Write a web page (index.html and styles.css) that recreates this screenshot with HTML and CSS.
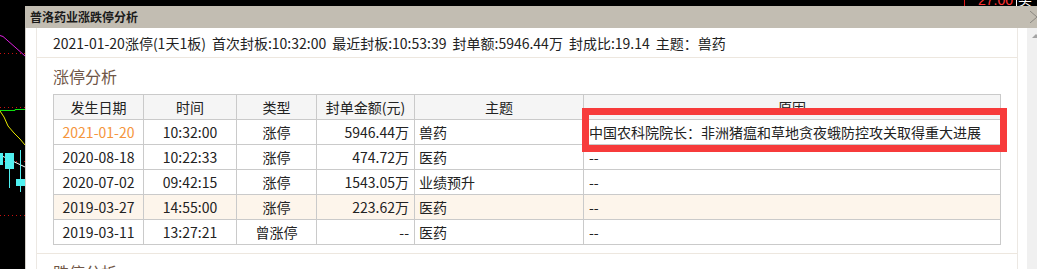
FILE: index.html
```html
<!DOCTYPE html>
<html lang="zh-CN">
<head>
<meta charset="utf-8">
<title>普洛药业涨跌停分析</title>
<link rel="stylesheet" href="styles.css">
</head>
<body>
<svg class="chart" width="1037" height="269" viewBox="0 0 1037 269">
  <rect width="1037" height="269" fill="#000"/>
  <g stroke="#c81010" stroke-dasharray="1 3">
    <line x1="0" y1="53.5" x2="25" y2="53.5"/>
    <line x1="0" y1="107.5" x2="25" y2="107.5"/>
    <line x1="0" y1="161.5" x2="25" y2="161.5"/>
    <line x1="0" y1="215.5" x2="25" y2="215.5"/>
  </g>
  <polyline points="0,35.5 3,36.5 20,51.5 25,56" fill="none" stroke="#e020e0"/>
  <polyline points="0,110.5 15,110.5 15,109.5 25,109.5" fill="none" stroke="#10e010"/>
  <polyline points="0,111 4,117 8,126 14,133 20,139 25,145" fill="none" stroke="#e8e800"/>
  <polyline points="0,155 25,167" fill="none" stroke="#ffffff"/>
  <g fill="#50f0f0" stroke="none">
    <rect x="0" y="153" width="3" height="12"/>
    <rect x="5" y="153" width="9" height="16"/>
    <rect x="9" y="168" width="1" height="20"/>
    <rect x="16" y="179" width="9" height="7"/>
    <rect x="20" y="150" width="1" height="42"/>
  </g>
  <line x1="964.5" y1="0" x2="964.5" y2="6" stroke="#e01818"/>
  <text x="978" y="5" fill="#ff3333" font-family="Liberation Sans, sans-serif" font-size="14">27.00</text>
  <line x1="1016.5" y1="0" x2="1016.5" y2="6" stroke="#ffffff"/>
  <text x="1018" y="5" fill="#ffffff" font-family="Noto Sans CJK SC, sans-serif" font-size="14">买</text>
</svg>

<div class="dialog">
  <div class="titlebar">
    <span class="title">普洛药业涨跌停分析</span>
    <svg class="close" width="7" height="12" viewBox="0 0 7 12">
      <line x1="0" y1="0" x2="14" y2="12" stroke="#8a8780"/>
      <line x1="0" y1="12" x2="14" y2="0" stroke="#8a8780"/>
    </svg>
  </div>
  <div class="dlg-body">
    <div class="gutter"></div>
    <div class="panel">
      <div class="info">
        <span>2021-01-20涨停(1天1板)</span>
        <span>首次封板:10:32:00</span>
        <span>最近封板:10:53:39</span>
        <span>封单额:5946.44万</span>
        <span>封成比:19.14</span>
        <span>主题：兽药</span>
      </div>
      <section class="section">
        <h2 class="sec-title">涨停分析</h2>
        <div class="grid">
          <div class="row head">
            <div class="cell c">发生日期</div>
            <div class="cell c">时间</div>
            <div class="cell c">类型</div>
            <div class="cell c">封单金额(元)</div>
            <div class="cell c">主题</div>
            <div class="cell c">原因</div>
          </div>
          <div class="row">
            <div class="cell c latest">2021-01-20</div>
            <div class="cell c">10:32:00</div>
            <div class="cell c">涨停</div>
            <div class="cell r">5946.44万</div>
            <div class="cell l">兽药</div>
            <div class="cell l reason">中国农科院院长：非洲猪瘟和草地贪夜蛾防控攻关取得重大进展</div>
          </div>
          <div class="row">
            <div class="cell c">2020-08-18</div>
            <div class="cell c">10:22:33</div>
            <div class="cell c">涨停</div>
            <div class="cell r">474.72万</div>
            <div class="cell l">医药</div>
            <div class="cell l reason">--</div>
          </div>
          <div class="row">
            <div class="cell c">2020-07-02</div>
            <div class="cell c">09:42:15</div>
            <div class="cell c">涨停</div>
            <div class="cell r">1543.05万</div>
            <div class="cell l">业绩预升</div>
            <div class="cell l reason">--</div>
          </div>
          <div class="row hl">
            <div class="cell c">2019-03-27</div>
            <div class="cell c">14:55:00</div>
            <div class="cell c">涨停</div>
            <div class="cell r">223.62万</div>
            <div class="cell l">医药</div>
            <div class="cell l reason">--</div>
          </div>
          <div class="row">
            <div class="cell c">2019-03-11</div>
            <div class="cell c">13:27:21</div>
            <div class="cell c">曾涨停</div>
            <div class="cell r">--</div>
            <div class="cell l">医药</div>
            <div class="cell l reason">--</div>
          </div>
        </div>
      </section>
      <section class="section">
        <h2 class="sec-title">跌停分析</h2>
      </section>
    </div>
    <div class="scrollbar"><span class="arrow-up"></span></div>
  </div>
</div>

<div class="mark"></div>
</body>
</html>
```

FILE: styles.css
```css
* { box-sizing: border-box; }

html, body {
  margin: 0;
  padding: 0;
  width: 1037px;
  height: 269px;
  overflow: hidden;
  background: #000;
  font-family: "Noto Sans CJK SC", "Noto Sans", sans-serif;
  color: #222;
}

.chart {
  position: absolute;
  left: 0;
  top: 0;
  display: block;
}

.dialog {
  position: absolute;
  left: 25px;
  top: 6px;
  width: 1012px;
  height: 263px;
  background: #fff;
  overflow: hidden;
  display: flex;
  flex-direction: column;
}

.titlebar {
  height: 22px;
  flex: none;
  background: #c2bdb2;
  display: flex;
  align-items: center;
  padding-left: 5px;
}

.title {
  font-size: 12px;
  font-weight: bold;
  color: #1a1a1a;
  line-height: 22px;
}

.close {
  margin-left: auto;
  display: block;
}

.dlg-body {
  flex: 1;
  display: flex;
  min-height: 0;
}

.gutter {
  width: 11px;
  flex: none;
  border-left: 1px solid #d4d1cb;
  background: #fff;
}

.panel {
  width: 982px;
  flex: none;
  border-left: 1px solid #ece8e3;
  border-right: 1px solid #ece8e3;
  background: #fff;
}

.info {
  height: 30px;
  padding: 1px 16px 0;
  line-height: 28px;
  font-size: 14px;
  display: flex;
  gap: 6px;
  white-space: nowrap;
  border-bottom: 1px solid #ede7df;
}

.section {
  padding: 8px 16px 8px;
  border-bottom: 1px solid #ede7df;
}

.sec-title {
  margin: 0 0 8px;
  font-size: 16px;
  line-height: 20px;
  font-weight: normal;
  color: #6f5646;
}

.grid {
  display: grid;
  grid-template-columns: 90px 93px 80px 98px 169px 417px;
  border-top: 1px solid #cacaca;
  border-left: 1px solid #cacaca;
  width: 948px;
  font-size: 14px;
}

.row { display: contents; }

.cell {
  height: 25px;
  line-height: 24px;
  border-right: 1px solid #cacaca;
  border-bottom: 1px solid #cacaca;
  white-space: nowrap;
  overflow: hidden;
}

.head .cell { background: #f5f5f5; }
.hl .cell { background: #fdf5eb; }

.c { text-align: center; }
.r { text-align: right; padding-right: 5px; }
.l { text-align: left; padding-left: 4px; }
.reason { padding-left: 5px; }

.latest { color: #f5953c; }

.scrollbar {
  margin-left: 9px;
  width: 10px;
  flex: none;
  background: #f0f0f0;
  padding-top: 6px;
}

.arrow-up {
  display: block;
  width: 0;
  height: 0;
  margin-left: 5px;
  border-left: 4px solid transparent;
  border-right: 4px solid transparent;
  border-bottom: 4px solid #a3a3a3;
}

.mark {
  position: absolute;
  left: 582px;
  top: 108px;
  width: 425px;
  height: 44px;
  border: 7px solid #f73b3b;
}
```
